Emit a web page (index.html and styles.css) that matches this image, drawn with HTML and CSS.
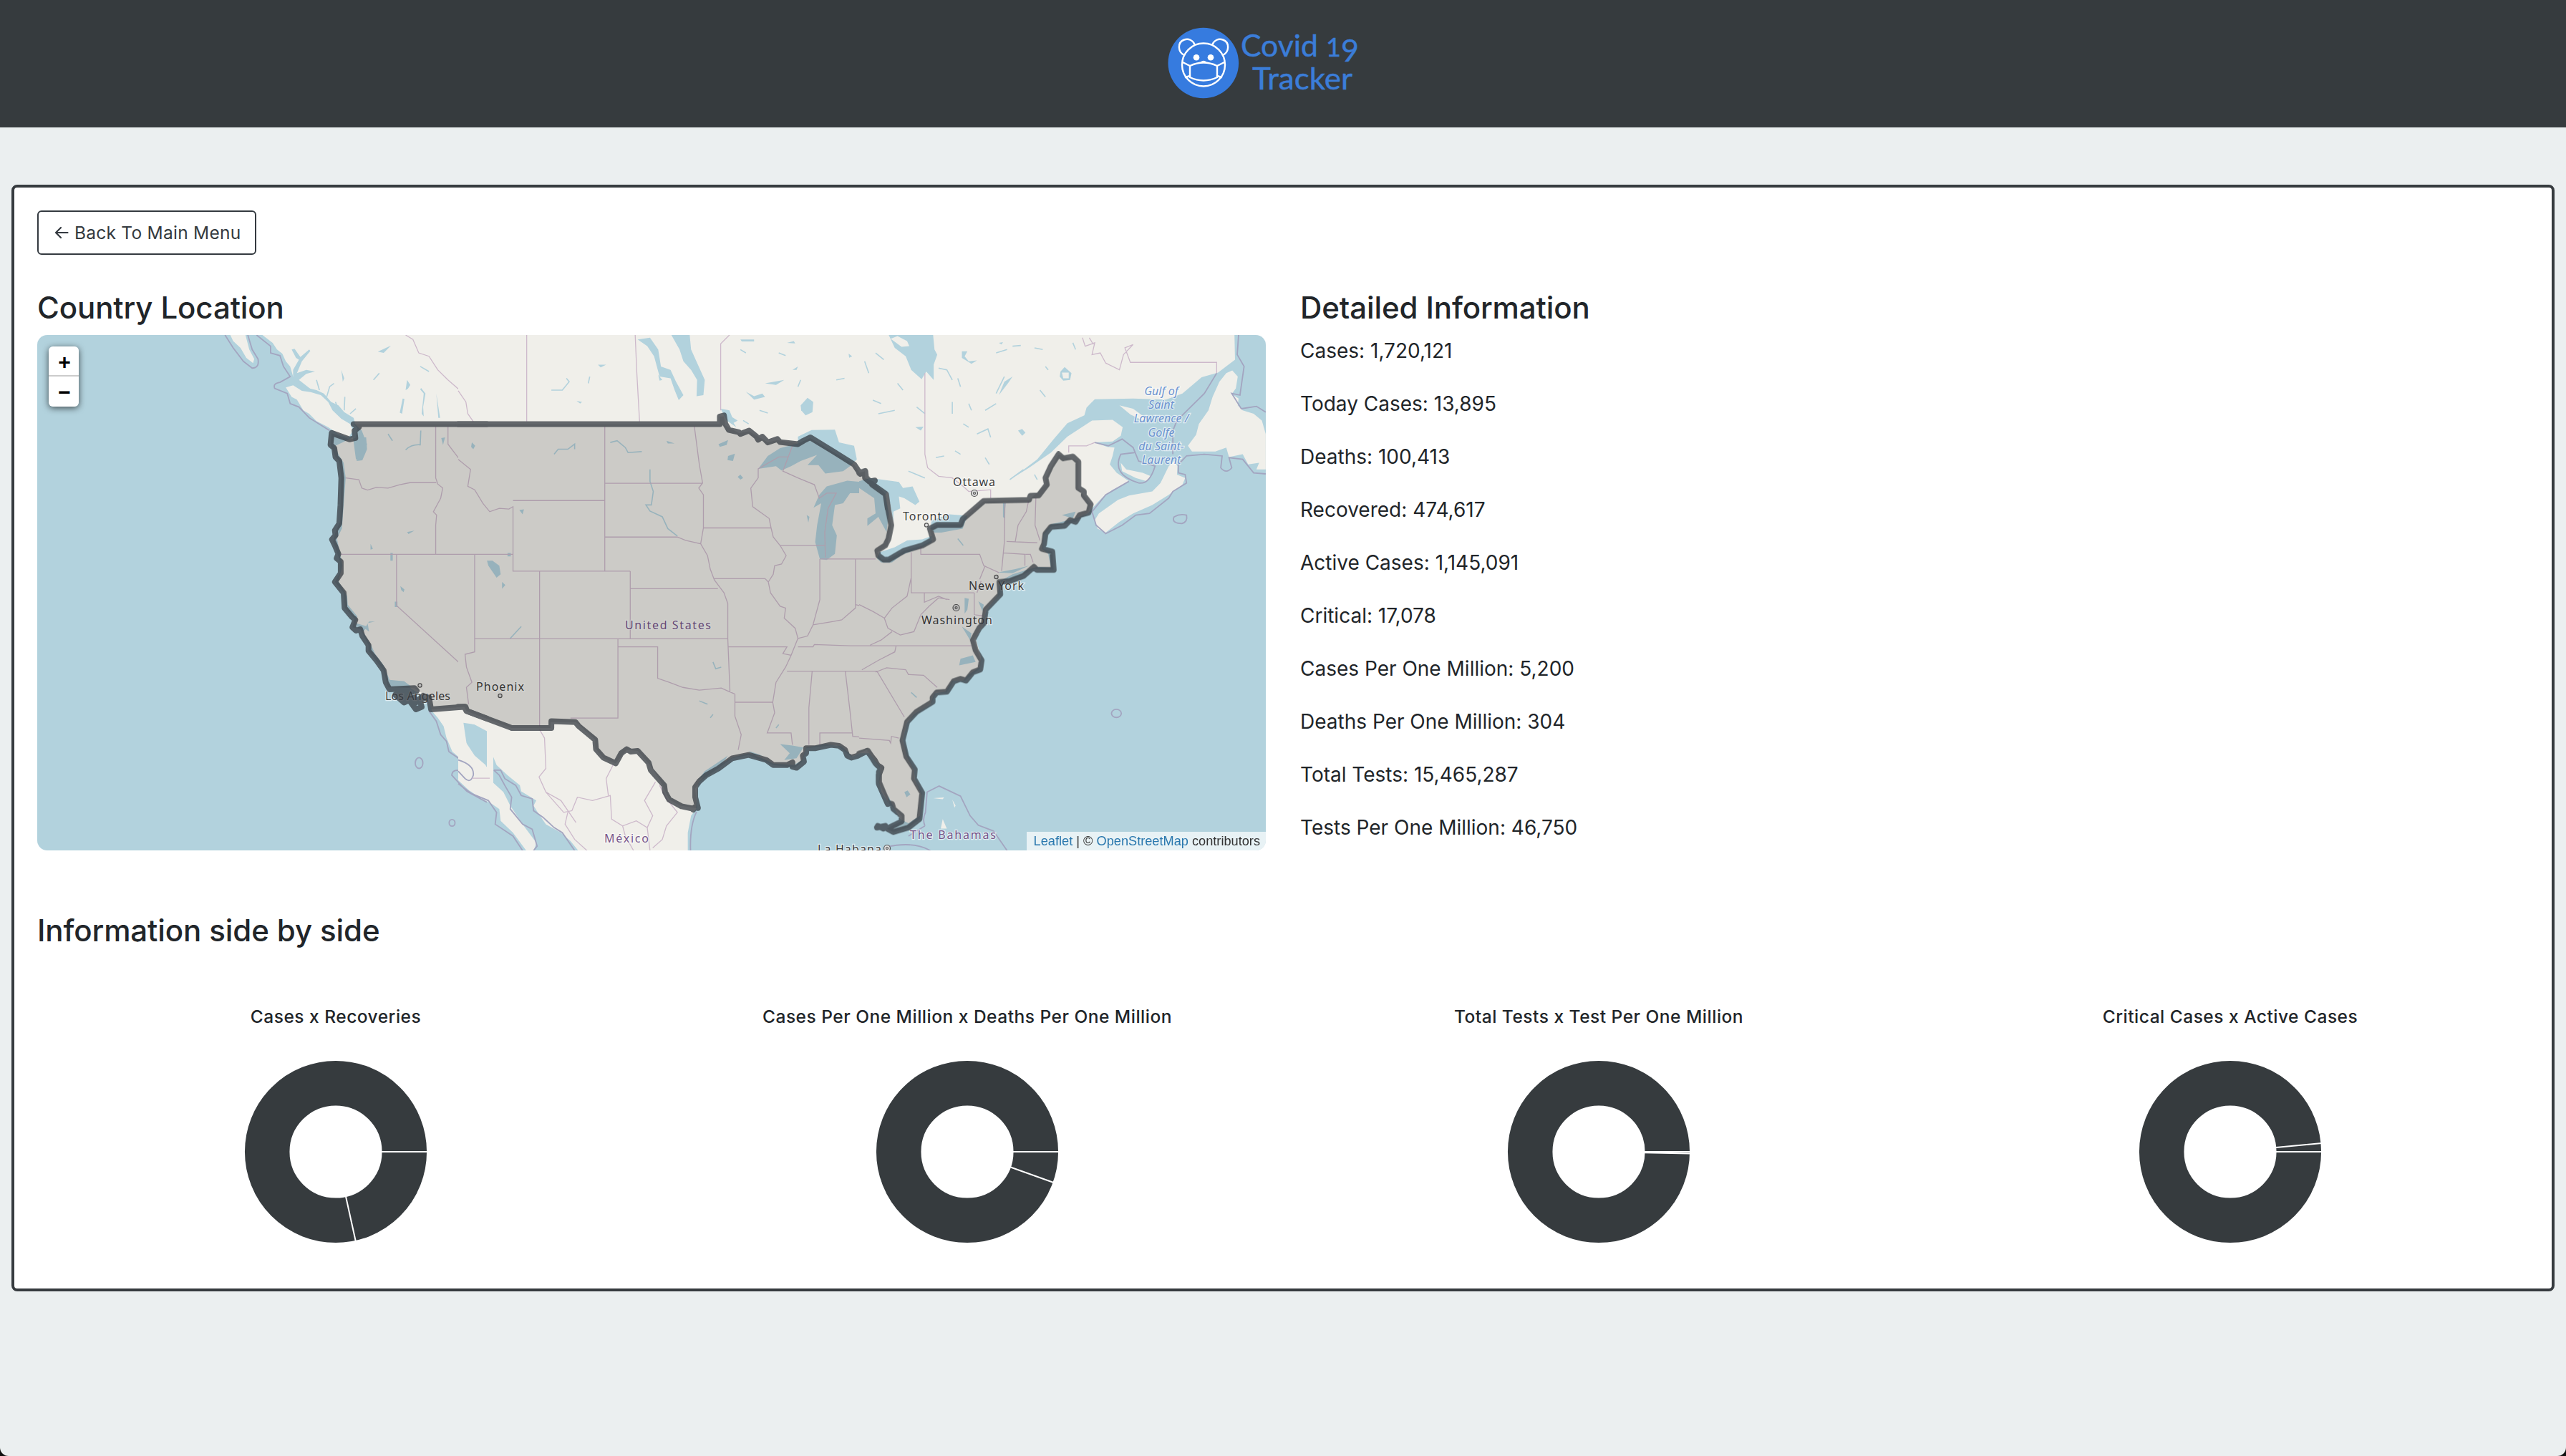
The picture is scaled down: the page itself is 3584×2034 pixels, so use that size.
FILE: index.html
```html
<!DOCTYPE html>
<html lang="en">
<head>
<meta charset="utf-8">
<title>Covid 19 Tracker</title>
<link rel="stylesheet" href="styles.css">
</head>
<body>
<header class="navbar">
  <svg class="logo" viewBox="1624 30 280 116" role="img" aria-label="Covid 19 Tracker">
    <circle cx="1680.8" cy="88" r="49.3" fill="#367bdf"/>
    <g fill="none" stroke="#fff" stroke-width="2.4" stroke-linecap="round" stroke-linejoin="round">
      <circle cx="1681" cy="90.500" r="30"/>
      <path d="M1654 77C1645 73 1644 59 1654 55.500C1660 53.500 1666 56 1668.500 62"/>
      <path d="M1708 77C1717 73 1718 59 1708 55.500C1702 53.500 1696 56 1693.500 62"/>
      <path d="M1662 92Q1681 83 1700 92V108Q1681 117 1662 108Z"/>
      <path d="M1662 92L1652 87M1700 92L1710 87M1662 106L1656 108M1700 106L1706 108"/>
    </g>
    <g fill="#fff"><circle cx="1671" cy="80.300" r="4.300"/><circle cx="1691" cy="80.300" r="4.300"/><path d="M1676.500 87Q1681 82.500 1685.500 87Z"/></g>
    <g class="logo-text">
      <text x="1733" y="79" textLength="108" lengthAdjust="spacingAndGlyphs">Covid</text>
      <text x="1852" y="79" font-size="36">1</text>
      <text x="1873" y="85.500">9</text>
      <text x="1749" y="125" textLength="140" lengthAdjust="spacingAndGlyphs">Tracker</text>
    </g>
  </svg>
</header>

<main class="card">
  <button class="back"><svg class="arrow" viewBox="0 0 20 18"><path d="M18.500 9H2M9 2L2 9L9 16"/></svg>Back To Main Menu</button>

  <div class="row">
    <section class="half">
      <h2>Country Location</h2>
      <div class="map">
        <svg class="tiles" viewBox="52 468 1716 720" preserveAspectRatio="none">
          <g class="terrain">
            <!-- Pacific coast -->
            <g transform="translate(40 460) scale(.40816 .47194)">
              <path class="land" d="M690 17L700 35L725 55L745 85L768 100L772 88L755 60L742 17Z"/>
              <path class="land" d="M800 17L835 40L850 60L868 72L880 95L895 110L905 140L925 160L960 175L985 180L1010 190L1035 215L1060 225L1080 245L1112 262L1118 282L1140 300L1158 340L1140 385L1120 385L1110 320L1050 345L1060 370L1078 395L1085 440L1078 520L1072 590L1055 620L1065 660L1074 700L1060 745L1090 790L1092 815L1125 850L1120 870L1160 880L1145 895L1172 935L1185 960L1215 995L1235 1038L1285 1042L1310 1065L1350 1085L1370 1100L1380 1130L1400 1150L1420 1175L1430 1210L1450 1250L1490 1280L1510 1290L1525 1325L1500 1335L1480 1335L1510 1365L1540 1385L1575 1400L1590 1400V17Z"/>
              <path class="land" d="M880 172L905 166L935 182L965 186L1000 195L1025 215L1040 240L1070 265L1100 280L1110 300L1095 320L1060 310L1025 290L985 272L960 250L940 240L918 208L900 200Z"/>
              <g class="water">
                <path d="M905 120L925 90L915 85L900 60L910 58L930 82L960 60L964 64L935 95L918 130L950 120L980 125L950 132L925 150L940 160L965 177L930 168L905 150Z"/>
                <path d="M1270 247L1280 205L1286 206L1278 250ZM1345 250L1352 190L1340 178L1343 174L1358 190L1350 230L1352 258ZM1395 190L1408 262L1402 262ZM1290 180L1295 150L1306 165L1298 176ZM1195 66L1240 48L1215 70ZM1070 120L1080 145L1075 155ZM1128 295L1140 320L1155 320L1158 355L1142 388L1122 390L1137 352L1128 325ZM1515 335L1522 330L1527 355H1516ZM1412 322L1425 320L1418 342ZM1238 662H1246V685H1238ZM1272 760L1286 770L1283 778L1275 772ZM1295 600L1320 596L1300 606ZM1170 635L1178 650L1170 652ZM1150 885L1165 865L1185 865L1160 870L1165 895ZM1253 806H1262V822H1253ZM1236 1040L1285 1042L1310 1058L1245 1060Z"/>
                <path d="M1488 1165L1530 1170L1568 1188V1295L1530 1280L1500 1235Z"/>
              </g>
              <path class="stream" d="M1060 240L1050 215M1080 240L1082 200M1020 200L1030 170L1045 160M1245 330L1230 310M1290 357Q1310 340 1340 342L1342 300M1100 250L1120 235M995 180L985 150M1180 150L1200 130M1340 110L1370 125"/>
              <g class="sea-border">
                <path d="M672 17L700 55L735 95L765 115Q790 115 785 88L765 60L750 17M780 17L828 50V70L860 78L872 110L895 140L860 157Q835 160 842 175L885 190L895 220L925 230L960 262L1030 300"/>
                <path d="M1370 1130L1395 1160L1410 1200L1430 1220L1438 1250L1480 1275L1512 1300Q1520 1330 1490 1328L1480 1308Q1450 1300 1448 1320L1480 1350L1500 1368L1568 1400"/>
                <ellipse cx="1336" cy="1284" rx="13" ry="16"/><circle cx="1449" cy="1461" r="10"/>
              </g>
              <g class="border">
                <path d="M1290 17L1315 30L1335 70L1370 80L1400 120L1435 150L1475 180L1495 205L1500 240L1520 273"/>
                <path d="M1085 440L1130 445L1140 470L1160 476L1190 468L1230 470L1270 460L1305 454H1395M1393 288V440L1400 458L1417 470L1410 500L1385 540L1396 550L1393 580V666M1068 666H1568M1259 666V818L1500 1008M1526 666V955Q1515 965 1495 960L1500 1000L1520 1045L1500 1060L1505 1115M1435 288V340L1470 380L1515 415L1505 460L1515 478L1535 475L1568 518M1526 917H1568M1522 1329H1568"/>
              </g>
            </g>
            <!-- Central plains and Mexico -->
            <g transform="translate(640 460) scale(.38265 .47194)">
              <path class="land" d="M0 17H1570V1400L1545 1370L1537 1340L1548 1300L1520 1275L1490 1245L1440 1265L1400 1235L1340 1228L1270 1238L1255 1275L1225 1290L1150 1285L1110 1270L1060 1255L1000 1268L940 1295L900 1320L875 1345L868 1420L850 1440L838 1490V1545H440L410 1515L375 1490L320 1465L290 1430L275 1410L285 1395L230 1368L225 1350L180 1320L140 1290L115 1240L105 1190L60 1170L15 1160L22 1215L60 1262L100 1290L125 1340L165 1370L190 1410L235 1465L285 1520L275 1545H250L200 1490L155 1455L150 1420L105 1395L40 1365L0 1335Z"/>
              <g class="water">
                <path d="M778 17H845L850 60L875 105L900 150L895 195L870 198L872 150L850 120L822 95L808 60Z"/>
                <path d="M655 30L700 25L730 60L740 110L775 120L795 155L822 195L805 210L790 180L775 145L735 140L715 80L690 50Z"/>
                <path d="M1250 225L1275 203L1296 215L1293 245L1268 255L1252 240Z"/>
                <path d="M1095 413L1130 375L1175 352L1240 338L1240 318L1290 298L1375 297L1390 335L1445 345L1455 385L1430 405L1405 420L1340 427L1315 402H1275L1310 372L1250 390L1215 405L1180 418L1160 405Z"/>
                <path d="M1297 528L1318 490L1345 465L1420 448L1470 452L1520 465L1568 495V598L1555 560L1510 575L1492 580V560L1525 545L1520 500L1480 485L1430 485L1405 515L1375 520L1365 580L1382 610L1375 665L1345 683L1320 680L1303 630L1310 580L1325 515Z"/>
                <path d="M105 685L125 685L150 700L155 725L140 735L110 700ZM160 748L172 757L160 768ZM950 340L985 328L980 342L955 348ZM985 375L1010 368L1003 390L983 387ZM1020 437L1030 430L1040 440L1030 445ZM1272 550L1282 555L1278 572ZM50 335L62 345L55 355L47 348ZM223 535L240 533L235 548ZM510 105L540 105L520 113ZM432 212L452 215L445 220ZM760 330L790 338H765ZM180 662H192V672H180ZM730 135L745 150L735 152ZM958 235L990 240L1000 260L1020 270L1005 277L1015 290L980 270ZM1050 185L1080 198L1110 190L1120 200L1080 208ZM1030 30L1080 30V36H1035ZM1200 40L1225 35L1230 42ZM1120 160L1190 150L1160 165ZM1220 120L1240 110L1235 120ZM1425 72L1438 80L1427 84ZM1175 1228L1220 1232L1260 1238L1235 1270L1190 1275L1210 1255ZM1060 1248L1110 1262L1080 1262ZM875 1335L900 1308L985 1262L960 1290Z"/>
              </g>
              <path class="stream" d="M555 335L580 330L610 350L620 365L670 362M700 415V450L712 480L705 520L685 520L700 538L745 555L765 590L800 612M350 370L365 355L400 355L425 340V355M340 180H380L405 155L395 145M190 915L230 880M480 140L475 160M880 1100L910 1110M930 985L940 1005L960 1000M1030 60L1050 70M1170 70L1195 78M1250 150L1240 170M1040 270L1060 280M1100 240L1130 248M1380 150L1410 145M930 1140L920 1150M1170 1170L1160 1180"/>
              <g class="sea-border">
                <path d="M0 1275Q60 1290 55 1320Q45 1345 25 1330L0 1308M0 1345L50 1375L110 1395L140 1430L135 1465L200 1500L235 1543M130 1305L150 1320L170 1350L195 1385L190 1420L235 1465L270 1480L288 1530L275 1543M130 1305L155 1305L170 1330L210 1350L230 1380L270 1390L275 1425L310 1445L350 1475L380 1490L425 1543M870 1428Q845 1470 848 1543"/>
              </g>
              <g class="border">
                <path d="M250 17V273M646 17L652 130L662 273M958 240V43L990 17M0 182L28 215L35 250L55 273"/>
                <path d="M0 385L45 415L35 465L60 475L90 515L115 540L150 530L185 532L200 525V716H628M200 507H535M535 288V716M535 456H890M862 288L880 400L892 455L878 470L895 490V588H1142M535 615H800L830 625L885 635L895 588M885 635L910 670L920 710L935 742L970 780L984 812V916L992 1075M0 666H200M60 666V955L25 962L30 1000L50 1045L30 1060L38 1110M60 916H984M297 716V1175M628 716V916M628 768H948M932 738H1120L1132 748M583 916V1151H410M583 940H728V1033L770 1045L820 1060L880 1068L960 1062L1010 1080M1010 1080V1145L1033 1200L1022 1245M1010 1104H1148M985 940H1200L1185 960L1215 965M1142 588L1150 615L1175 640L1197 670L1180 695L1155 700L1150 725L1132 748L1140 780L1175 820L1195 825L1190 855L1230 885L1240 915L1215 965L1195 1000L1160 1045L1148 1104L1155 1135L1128 1195H1215L1220 1230M1175 640H1340M1142 588L1135 560L1075 525L1068 470L1095 440V413L1170 378H1203M1220 345L1185 420L1240 440L1300 460L1318 500L1345 485H1380L1350 530L1338 600L1340 675M1320 680V800L1295 875L1275 908L1240 915M1322 680H1525M1450 680V825L1400 860L1370 865L1295 875M1450 815L1500 825L1568 845M1240 940H1295L1300 933L1430 937H1568M1200 1012H1568M1292 1012L1280 1120V1230M1413 1012L1430 1130L1440 1205L1568 1215M1320 1230V1195H1440M1470 1010L1568 955M1518 1020L1568 1070M297 1185L315 1210L320 1300L295 1325L320 1370L375 1395L430 1460M320 1370L385 1430L415 1425L435 1385L490 1395L555 1380L560 1450L600 1470L650 1455L690 1475L700 1543M565 1290L540 1330L548 1380M720 1340L680 1395L710 1440L690 1475M735 1350L760 1390L800 1430L760 1470L745 1510L710 1535M400 1430L390 1465L425 1510L470 1543M50 1329H115M600 1470L610 1500L640 1543"/>
              </g>
            </g>
            <!-- Atlantic coast -->
            <g transform="translate(1200 460) scale(.38265 .47194)">
              <path class="land" d="M0 17H1370L1372 90L1310 128L1250 142L1180 190L1120 208L1000 205L860 207L830 232L822 255L760 278L710 325L650 385L560 440L620 410L700 365L760 318L850 270L925 268L962 290L955 315L925 332L860 335L905 348L932 350L925 375L915 400L940 425L985 450L925 475L885 500L850 530L835 545L790 560L750 568L700 577L672 605L668 650L690 665L700 705L650 703L600 715L560 725L515 745L505 790L465 830L450 880L425 915L445 970L440 1000L400 1022L380 1040L340 1040L315 1072L275 1078L260 1110L200 1140L175 1165L160 1215L175 1265L200 1305L205 1335L228 1380L222 1440L180 1462L150 1450L120 1405L90 1350L78 1320L75 1290L40 1255L0 1255Z"/>
              <path class="land" d="M875 545L945 505L985 492L1070 480L1100 455L1130 405L1150 390L1162 405L1160 430L1190 440L1180 460L1130 490L1070 520L1000 545L950 570L900 602L870 590L860 565ZM955 395L975 415L1035 425L1065 435L1050 450L1010 440L960 420ZM950 225L1000 235L1050 265L1040 272L990 252Z"/>
              <path class="land" d="M1340 130L1362 122L1382 140L1375 175L1360 192L1385 205L1382 225L1400 240L1440 250L1470 270L1484 310V415L1450 415L1460 395L1420 400L1400 370L1350 378L1340 350L1300 362L1215 362L1200 345L1230 312L1240 280L1275 240L1290 200L1315 155Z"/>
              <path class="land" d="M298 1478L305 1450L320 1478ZM270 1388L310 1386L305 1391ZM340 1392L352 1410L348 1416Z"/>
              <g class="water">
                <path d="M108 17H270L275 60L285 75L272 105V150L245 125L228 148L190 120L170 80L130 55Z"/>
                <path d="M0 450L40 440L145 452L160 470L195 465L220 510L205 520L165 500L145 495L150 530L125 540L125 570L105 480L95 490L108 545L100 600L70 555L30 582V560L60 545L55 500L0 470Z"/>
                <path d="M75 660L130 645L175 625L230 622L265 612V630L230 645L155 668L120 690L80 690L65 678ZM260 590L265 565L330 548L395 552L378 590L300 602L275 602Z"/>
                <path d="M735 125L750 112L775 130L770 150L745 152L732 140ZM580 300L595 295L607 306L595 315ZM520 175L530 155L560 140L545 158L510 195ZM375 65L395 65L385 80L400 95L430 92L410 102L375 85ZM510 40L525 38L520 45ZM205 290L235 288L225 300ZM505 720L570 710L620 700L560 722ZM385 795L400 798L395 830L385 842ZM435 805L455 815L450 835ZM375 880L410 900L405 920ZM370 975L415 965L425 985L365 995ZM525 515H535L530 560L525 555ZM165 1370L177 1365L187 1377L173 1385ZM740 550L790 540L780 560ZM0 585L8 590Z"/>
              </g>
              <path class="land" d="M115 28L140 20L175 35L183 50L155 52ZM740 128H765V145H745Z"/>
              <path class="stream" d="M20 95L35 130M50 210L80 220M70 250L130 240M210 230L240 250M290 115L320 120L340 150M360 145L370 170M400 220L410 240M430 310L470 295L480 320M380 280L400 290M500 70L540 60M680 110L690 120M640 55L670 60M780 40L790 60M460 380L475 400M350 360L370 370M280 380L310 375M550 445L600 415M530 140L500 190M660 180L680 200M180 420L240 440M560 50L590 48M90 90L60 70M140 160L160 180M460 240L500 220M340 250V215M640 430L650 445M360 620L380 640M190 1075L210 1090"/>
              <g class="sea-border">
                <path d="M1385 17L1380 75L1405 110L1390 195L1360 190L1395 235L1450 228L1484 245M1305 130L1260 190L1160 270L1145 300V370M1165 425V400L1195 375L1260 370L1325 375L1320 410Q1340 430 1360 410L1350 380L1400 385L1440 425L1484 428M860 335L910 345L960 325L1000 350L1020 390L1080 405Q1060 460 1020 455Q920 430 955 370L1005 365M985 450L900 490L850 540L865 580L900 605L960 580L1010 550L1060 545L1130 500L1145 480L1195 455L1190 430L1165 425"/>
                <path d="M1150 555Q1170 545 1195 550Q1200 570 1178 575Q1145 575 1147 560Z"/><ellipse cx="939" cy="1137" rx="18" ry="12"/>
                <path d="M240 1470Q230 1450 242 1430L248 1370L292 1352L370 1382L405 1440L435 1468L490 1485L540 1543M240 1470L180 1500M100 1532Q200 1515 260 1543"/>
              </g>
              <g class="border">
                <path d="M240 130V370L250 410L290 435L340 440L380 465L400 480L480 475V500M765 365V345L830 345L860 335M815 25L825 50L860 40L850 75L880 70L900 100L950 120L965 75L1000 45L970 55L990 98H1305V130M840 25L855 45"/>
                <path d="M0 680H60M190 660V780H420M225 640V666H440L455 700L510 720M440 740L460 700M420 780V845L450 848M430 780L445 745M532 515L530 630L520 715M538 628L650 632M618 510L610 540L580 580L570 628M645 500L642 580L660 625M525 662L605 666V700M607 666H625L635 690M190 735L175 790L120 825L92 855L105 885L150 905L200 895L225 845L255 820L290 795L330 800M238 780V808L290 790L320 800M0 815L50 835L92 855M120 895L80 920L40 935M0 937H410M135 937L130 955L70 980L10 1008M0 1012H65L165 1148M60 1015L100 1002L170 1008L180 1022L235 1024L285 1060M0 1210L110 1217L115 1225L118 1205L145 1210"/>
              </g>
            </g>
          </g>
          <g class="labels">
            <text x="873" y="878.500" class="country" textLength="120">United States</text>
            <text x="844" y="1177" class="country" textLength="62">México</text>
            <text x="1271" y="1171.500" class="country" textLength="120">The Bahamas</text>
            <text x="538" y="978" textLength="91">Los Angeles</text>
            <text x="665" y="965" textLength="67">Phoenix</text>
            <text x="1331" y="678.500" textLength="59">Ottawa</text>
            <text x="1261" y="727" textLength="65">Toronto</text>
            <text x="1353" y="824" textLength="77">New York</text>
            <text x="1287" y="871.500" textLength="99">Washington</text>
            <text x="1142" y="1192" textLength="89">La Habana</text>
            <g class="sea"><text x="1622" y="552">Gulf of</text><text x="1622" y="571">Saint</text><text x="1622" y="590">Lawrence /</text><text x="1622" y="609.500">Golfe</text><text x="1622" y="628.500">du Saint-</text><text x="1622" y="648">Laurent</text></g>
            <g fill="#ddd" stroke="#555" stroke-width="1.200">
              <circle cx="586.500" cy="957.500" r="2.600"/><circle cx="698.500" cy="972" r="2.600"/><circle cx="1294" cy="733.500" r="2.600"/><circle cx="1391.500" cy="806" r="2.600"/>
              <circle cx="1361" cy="689" r="4.500"/><circle cx="1335.500" cy="849" r="4.500"/><circle cx="1239" cy="1185" r="4.500"/>
              <circle cx="1361" cy="689" r="1.500"/><circle cx="1335.500" cy="849" r="1.500"/><circle cx="1239" cy="1185" r="1.500"/>
            </g>
          </g>
          <!-- Country shape: fill, then outline -->
          <g class="country-fill">
            <path transform="translate(40 460) scale(.40816 .47194)" d="M1568 281H1112L1125 292L1118 322L1098 326L1037 307L1033 342L1050 378L1063 390L1070 440L1066 570L1050 600L1042 628L1065 685V720L1048 748L1078 780L1082 825L1115 857L1108 882L1135 888L1163 935V952L1215 1010L1230 1060L1320 1062L1370 1090L1377 1125L1495 1117L1500 1130L1568 1152Z"/>
            <path transform="translate(640 460) scale(.38265 .47194)" d="M0 281H955V258H970L975 285L1025 307L1062 302L1100 320L1130 335L1165 328L1240 338L1285 322L1445 400L1465 425L1485 420V440L1515 450L1560 488L1568 530V640L1530 660L1545 682H1568V1400L1535 1340L1545 1300L1492 1245L1435 1265L1380 1230L1270 1240L1255 1280L1230 1298L1150 1290L1060 1260L1000 1270L880 1340L865 1360L872 1418L810 1410L770 1392L740 1340L700 1290L655 1248L615 1245L575 1285L530 1270L500 1240V1215L430 1163H337V1180H195L30 1130L22 1117H0Z"/>
            <path transform="translate(1200 460) scale(.38265 .47194)" d="M98 488L105 530L117 580L107 620L95 640ZM102 682L165 655L230 640L268 622L258 590L285 577H370L385 555L455 508L620 505L680 460V440L728 370L800 390V470L845 518L835 543L790 570L700 585L672 610V650L705 658L710 712L640 710L550 745L515 750V785L462 830L455 870L418 920L445 980L440 1005L385 1040L345 1040L320 1075H280L265 1105L175 1160L158 1217L200 1305V1330L230 1372L222 1450L180 1475L125 1488L100 1478L155 1455V1440L110 1405L72 1340L78 1300L30 1248L102 1240Z"/>
          </g>
          <g class="country-line">
            <path transform="translate(40 460) scale(.40816 .47194)" d="M1568 281H1112L1130 290L1115 300L1118 322L1098 326L1037 307L1033 342L1046 352L1050 378L1063 390L1070 440L1067 520L1063 575L1048 595L1050 610L1038 622L1048 640L1060 665L1054 678L1068 688V722L1048 748L1078 780L1081 825L1105 850L1118 860L1108 882L1120 892L1135 888L1142 908L1163 935V952L1190 980L1215 1010L1222 1045L1235 1066L1320 1062L1328 1070L1280 1080L1255 1082L1285 1105L1320 1090L1308 1105L1325 1125L1345 1118L1338 1095L1370 1090L1377 1125L1495 1117L1500 1130L1568 1152M1260 1078L1290 1096L1310 1072M1325 1105L1350 1085"/>
            <path transform="translate(640 460) scale(.38265 .47194)" d="M0 281H955V258L970 255L975 280L988 298L1025 305L1030 310L1062 300L1088 317L1095 327L1110 318L1130 335L1165 325L1175 334L1240 340L1260 330L1285 320L1370 362L1445 400L1468 428L1485 420V440L1500 450L1520 448L1510 458L1560 488L1568 530M0 1117H22L30 1130L195 1180H340V1160L428 1163L440 1175L500 1215L503 1243L530 1268L575 1285L595 1255L615 1243L630 1250L655 1248L695 1283L703 1305L752 1350L755 1370L770 1392L815 1412L852 1418L858 1422L863 1415L875 1417L865 1385V1355L880 1338L905 1320L950 1300L1000 1270L1060 1260L1125 1275L1150 1290H1200L1220 1282V1295L1235 1298L1262 1280L1258 1262L1270 1255V1240L1305 1240L1360 1230L1390 1233L1412 1245L1420 1262L1435 1268L1460 1262L1492 1248L1520 1275L1530 1290L1545 1298L1535 1320V1345L1568 1405"/>
            <path transform="translate(1200 460) scale(.38265 .47194)" d="M0 425L22 420L25 438L40 452L57 448L48 460L98 488L105 530L117 580L107 620L95 640L66 655L70 670L90 682H108L165 655L230 640L270 622L258 590L285 579H370L378 562L455 508L620 505L625 493L655 492L685 460L680 440L700 405L728 370L745 382L780 377L800 392V470L820 480V492L845 518L837 543L805 550L790 570L770 565L750 582L700 585L680 605L675 635L667 650L705 658L710 712H648L638 703L600 730L550 745L512 748L515 785L462 830L455 870L438 885L415 920L425 950L447 980L442 1007L415 1015L390 1040L370 1035L345 1042L320 1073L283 1075L268 1090V1103L210 1132L175 1162L158 1217L172 1265L203 1303L200 1330L230 1372L220 1450L180 1475L125 1488L102 1478L155 1457V1440L125 1420L120 1405L105 1403L72 1340V1310L80 1300L60 1285L32 1248L0 1256M65 1475L95 1470M68 1470L88 1478"/>
          </g>
        </svg>
        <div class="zoom-control"><button class="zoom-btn">+</button><button class="zoom-btn">−</button></div>
        <div class="attribution"><a>Leaflet</a> | © <a>OpenStreetMap</a> contributors</div>
      </div>
    </section>
    <section class="half details">
      <h2>Detailed Information</h2>
      <p>Cases: 1,720,121</p>
      <p>Today Cases: 13,895</p>
      <p>Deaths: 100,413</p>
      <p>Recovered: 474,617</p>
      <p>Active Cases: 1,145,091</p>
      <p>Critical: 17,078</p>
      <p>Cases Per One Million: 5,200</p>
      <p>Deaths Per One Million: 304</p>
      <p>Total Tests: 15,465,287</p>
      <p>Tests Per One Million: 46,750</p>
    </section>
  </div>

  <h2 class="side-title">Information side by side</h2>
  <div class="row">
    <figure class="chart">
      <figcaption>Cases x Recoveries</figcaption>
      <svg class="donut" viewBox="-128 -128 256 256"><circle r="95.800"/><path d="M64 0H128M14 62.500L27.800 125"/></svg>
    </figure>
    <figure class="chart">
      <figcaption>Cases Per One Million x Deaths Per One Million</figcaption>
      <svg class="donut" viewBox="-128 -128 256 256"><circle r="95.800"/><path d="M64 0H128M60.500 21.500L120.500 43"/></svg>
    </figure>
    <figure class="chart">
      <figcaption>Total Tests x Test Per One Million</figcaption>
      <svg class="donut" viewBox="-128 -128 256 256"><circle r="95.800"/><path d="M64 0H128M64 1.200L128 2.400"/></svg>
    </figure>
    <figure class="chart">
      <figcaption>Critical Cases x Active Cases</figcaption>
      <svg class="donut" viewBox="-128 -128 256 256"><circle r="95.800"/><path d="M64 0H128M64 -6L128 -12"/></svg>
    </figure>
  </div>
</main>
</body>
</html>
```
FILE: styles.css
```css
* { box-sizing: border-box; }
html { background: #111; }
body {
  margin: 0;
  min-height: 2034px;
  border-radius: 0 0 12px 12px;
  background: #ebeff0;
  color: #212529;
  font-family: Inter, "Liberation Sans", sans-serif;
  font-size: 28px;
  line-height: 42px;
}
.navbar {
  height: 178px;
  padding: 30px 0 0 1624px;
  background: #363b3e;
}
.logo { display: block; width: 280px; height: 116px; }
.logo-text { fill: #3b7dd8; stroke: #3b7dd8; stroke-width: .5px; font-family: Lato, sans-serif; font-size: 43px; }

.card {
  height: 1546px;
  margin: 80px 16px 0;
  padding: 32px;
  border: 4px solid #363b3f;
  border-radius: 8px;
  background: #fff;
}
.back {
  display: flex;
  align-items: center;
  gap: 8px;
  width: 306px;
  height: 62px;
  padding: 0 0 0 22px;
  border: 2px solid #343a40;
  border-radius: 6px;
  background: #fff;
  color: #343a40;
  font: 24.5px/36px Inter, sans-serif;
  letter-spacing: 0.25px;
  white-space: nowrap;
}
.arrow { width: 20px; height: 18px; fill: none; stroke: #343a40; stroke-width: 2.2; stroke-linecap: round; stroke-linejoin: round; }
.row { display: flex; margin: 0 -24px; }
.half { width: 50%; padding: 49px 24px 0; }
h2 { margin: 0 0 13px; font-size: 42px; font-weight: 500; line-height: 50px; letter-spacing: -0.1px; }
.details h2 { margin-bottom: 14px; }
.details p { margin: 0 0 32px; }

.map { position: relative; height: 720px; border-radius: 14px; overflow: hidden; background: #b2d2dd; }
.tiles { display: block; width: 100%; height: 100%; }
.terrain path, .terrain circle, .terrain ellipse { vector-effect: non-scaling-stroke; }
.land { fill: #f0efea; }
.water { fill: #b2d2dd; }
.stream { fill: none; stroke: #b2d2dd; stroke-width: 1.6; }
.border { fill: none; stroke: #cdb9cb; stroke-width: 1.3; }
.sea-border { fill: none; stroke: #a3a5c0; stroke-width: 1.8; }
.labels { fill: #3d3d3d; font: 16px "Noto Sans", sans-serif; }
.labels text { paint-order: stroke; stroke: rgba(255, 255, 255, .6); stroke-width: 2.5px; }
.labels .country { fill: #76558a; }
.sea { fill: #6c93cf; font-style: italic; text-anchor: middle; }
.country-fill { fill: #000; opacity: .15; }
.country-line { fill: none; stroke: #343a40; stroke-width: 8px; stroke-linecap: round; stroke-linejoin: round; opacity: .75; }
.country-line path { vector-effect: non-scaling-stroke; }
.zoom-control {
  position: absolute;
  left: 16px;
  top: 16px;
  width: 42px;
  border-radius: 6px;
  box-shadow: 0 2px 10px rgba(0, 0, 0, .65);
  overflow: hidden;
}
.zoom-btn {
  display: block;
  width: 42px;
  height: 42px;
  padding: 1px 0 0 2px;
  border: 0;
  background: #fff;
  color: #000;
  font: bold 30px/42px "Liberation Sans", sans-serif;
}
.zoom-btn:first-child { border-bottom: 2px solid #ccc; }
.attribution {
  position: absolute;
  right: 0;
  bottom: 0;
  width: 334px;
  padding-right: 8px;
  background: rgba(255, 255, 255, .7);
  color: #333;
  font: 18.2px/26px "Liberation Sans", sans-serif;
  text-align: right;
  white-space: nowrap;
}
.attribution a { color: #2a78ae; }

.side-title { margin: 66px 0 0; }
.chart { display: flex; flex-direction: column; align-items: center; width: 25%; margin: 0; padding-top: 77px; }
figcaption { font-size: 24.5px; font-weight: 500; line-height: 36px; letter-spacing: 0.5px; white-space: nowrap; }
.donut { width: 256px; height: 256px; margin-top: 43px; }
.donut circle { fill: none; stroke: #363b3e; stroke-width: 62.5; }
.donut path { stroke: #fff; stroke-width: 2; }
```
